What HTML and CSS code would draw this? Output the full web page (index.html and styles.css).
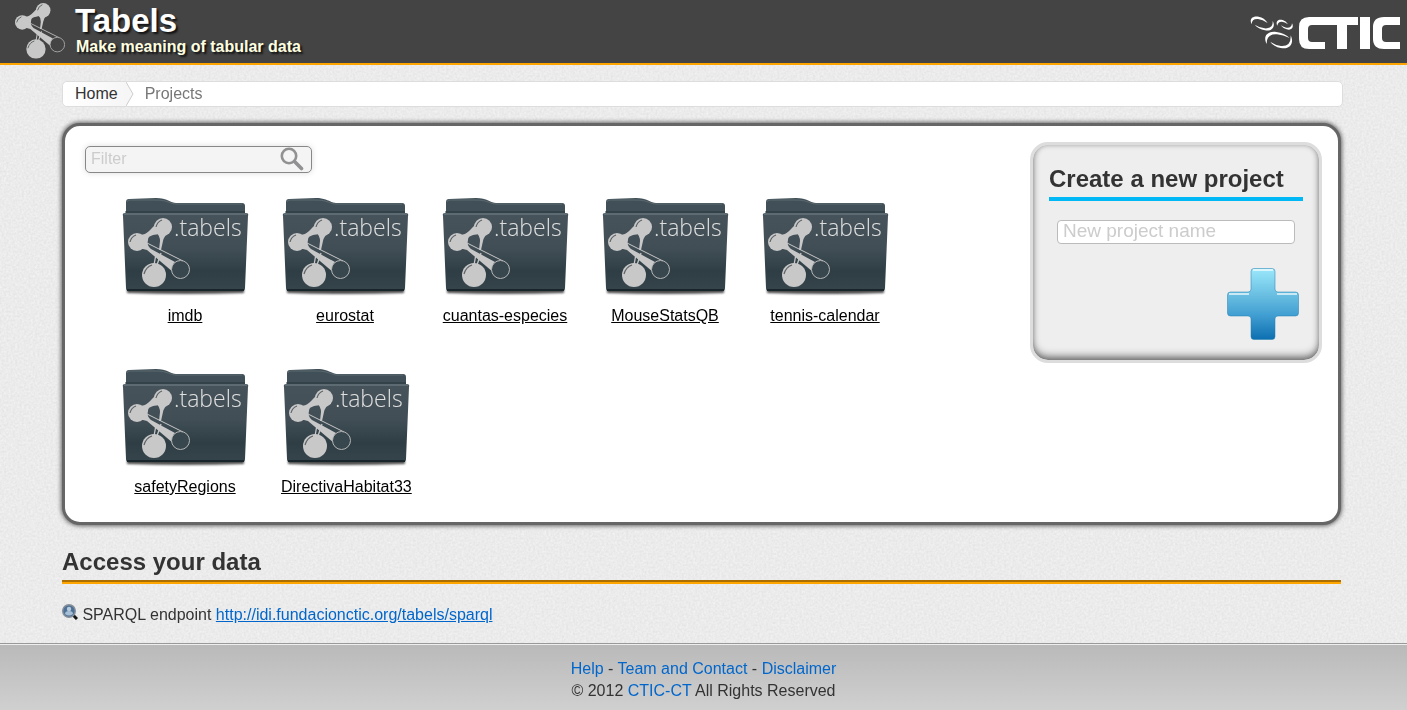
FILE: index.html
```html
<!DOCTYPE html>
<html lang="en">
<head>
<meta charset="utf-8">
<title>Tabels - Projects</title>
<link rel="stylesheet" href="styles.css">
</head>
<body>
<svg class="defs" aria-hidden="true">
  <defs>
    <linearGradient id="front" x1="0" y1="0" x2="0" y2="1"><stop offset="0" stop-color="#47535a"/><stop offset=".45" stop-color="#414e55"/><stop offset=".75" stop-color="#2f3e45"/><stop offset="1" stop-color="#36444b"/></linearGradient>
    <linearGradient id="plus" x1="0" y1="0" x2="0" y2="1"><stop offset="0" stop-color="#9ae8fb"/><stop offset=".4" stop-color="#66bce0"/><stop offset=".65" stop-color="#429fd2"/><stop offset="1" stop-color="#0c6fb0"/></linearGradient>
    <filter id="soft" x="-20%" y="-50%" width="140%" height="200%"><feGaussianBlur stdDeviation="1.2"/></filter>
    <filter id="grain" x="0" y="0" width="100%" height="100%" color-interpolation-filters="sRGB">
      <feTurbulence type="fractalNoise" baseFrequency=".45" numOctaves="2" seed="4"/>
      <feColorMatrix values=".08 0 0 0 .882  .08 0 0 0 .882  .08 0 0 0 .882  0 0 0 0 1"/>
    </filter>
    <symbol id="molecule" viewBox="0 0 62 70">
      <g fill="#c8c8c8">
        <circle cx="35" cy="10" r="9"/>
        <circle cx="9" cy="25" r="9"/>
        <circle cx="26" cy="58" r="12"/>
        <path d="M9 17c8 3 12-3 18-9l4 9c-7 1-11 2-11 6-1 4 0 6 3 9l24 13q-4 4-2 10L19 33l-8-2z"/>
        <path d="M28 15q4 4 4 9l-1 9h2l2-9q1-5 6-9z"/>
      </g>
      <path d="M28 37l-2 11M33 36l-4 12" fill="none" stroke="#c8c8c8" stroke-width="1.300"/>
      <path d="M19 26l36 18" fill="none" stroke="#c8c8c8"/>
      <circle cx="52.500" cy="52.500" r="9" fill="currentColor" stroke="#b5b5b5"/>
      <g fill="none" stroke="#5c6265" stroke-width="1.200">
        <path d="M28 10q1-5 6-7M2 25q1-5 6-7M16 57q2-7 8-9"/>
      </g>
    </symbol>
    <symbol id="folder" viewBox="0 0 128 104">
      <path d="M6 92h117v4q-59 2-117 0z" fill="#000" opacity=".7" filter="url(#soft)"/>
      <path d="M5 5q0-3 3-3l27-1c11 0 15 5 20 5h66q3 0 3 3v12H5z" fill="#415058"/>
      <path d="M6 5q0-2 3-2h26c11 0 15 4 20 4h66" fill="none" stroke="#5c686e"/>
      <path d="M4 15h120" stroke="#273238"/>
      <path d="M4 16h121q3 0 2 3l-3 72q0 3-3 3H8q-3 0-3-3L2 19q-1-3 2-3z" fill="url(#front)"/>
      <path d="M3 17h123" stroke="#75838a"/>
      <path d="M6 93h117" stroke="#18252b" stroke-width="2"/>
      <use href="#molecule" x="7" y="20" width="62" height="70"/>
      <text x="53" y="39" class="folder-word">.tabels</text>
    </symbol>
  </defs>
</svg>
<svg class="texture" aria-hidden="true"><rect width="100%" height="100%" filter="url(#grain)"/></svg>

<header class="header">
  <div class="brand">
    <svg class="brand-logo" viewBox="0 0 62 70" aria-hidden="true"><use href="#molecule"/></svg>
    <div>
      <h1 class="brand-name">Tabels</h1>
      <p class="brand-tagline">Make meaning of tabular data</p>
    </div>
  </div>
  <svg class="ctic" viewBox="0 0 152 34" role="img" aria-label="CTIC">
    <g fill="#fff">
      <path d="M101 1v8H63q-4 0-4 4v9q0 4 4 4h13v7H60q-10 0-10-10V11Q50 1 60 1z"/>
      <path d="M88 1h10v32H88zM111 1h10v32h-10z"/>
      <path d="M98 1h11v8H98z"/>
      <path d="M151 1v8h-14q-4 0-4 4v9q0 4 4 4h14v7h-16q-11 0-11-10V11q0-10 11-10z"/>
    </g>
    <g fill="#fff" transform="translate(-3 -6) scale(.3333)">
      <path d="M17 43C8 25 22 17 38 20q17 3 27 19Q50 28 36 27 17 26 17 43z"/>
      <path d="M80 32C90 50 78 65 57 61Q37 57 26 44 42 54 56 55 82 57 80 32z"/>
      <path d="M94 47C88 34 96 26 110 30q10 3 16 13-10-8-18-8-12-1-14 12z"/>
      <path d="M138 40C145 53 136 62 122 58q-11-3-18-12 9 6 17 7 16 2 17-13z"/>
      <path d="M62 102C50 78 64 62 91 66q24 3 40 18Q112 75 93 73 61 71 62 102z"/>
      <path d="M134 76C146 101 131 120 104 114q-20-4-32-19 17 11 33 13 31 2 29-32z"/>
    </g>
  </svg>
</header>

<main class="page">
  <nav class="crumbs" aria-label="Breadcrumb">
    <a class="crumb-home" href="#">Home</a>
    <svg class="crumb-arrow" viewBox="0 0 8 24" aria-hidden="true"><path d="M0 0l7 12-7 12z" fill="#f6f6f6"/><path d="M0 0l7 12-7 12" fill="none" stroke="#ccc"/></svg>
    <span class="crumb-current">Projects</span>
  </nav>

  <section class="panel">
    <div class="projects">
      <div class="filter">
        <input class="filter-input" type="text" placeholder="Filter" aria-label="Filter">
        <svg class="filter-icon" viewBox="0 0 24 24" aria-hidden="true"><circle cx="9" cy="9" r="7.200" fill="none" stroke="#919193" stroke-width="2.600"/><path d="M14.500 14.500l7 7" stroke="#919193" stroke-width="3.600" stroke-linecap="round"/></svg>
      </div>
      <ul class="folders">
        <li><a class="project" href="#"><svg class="folder" aria-hidden="true"><use href="#folder"/></svg>imdb</a></li>
        <li><a class="project" href="#"><svg class="folder" aria-hidden="true"><use href="#folder"/></svg>eurostat</a></li>
        <li><a class="project" href="#"><svg class="folder" aria-hidden="true"><use href="#folder"/></svg>cuantas-especies</a></li>
        <li><a class="project" href="#"><svg class="folder" aria-hidden="true"><use href="#folder"/></svg>MouseStatsQB</a></li>
        <li><a class="project" href="#"><svg class="folder" aria-hidden="true"><use href="#folder"/></svg>tennis-calendar</a></li>
        <li><a class="project" href="#"><svg class="folder" aria-hidden="true"><use href="#folder"/></svg>safetyRegions</a></li>
        <li><a class="project" href="#"><svg class="folder" aria-hidden="true"><use href="#folder"/></svg>DirectivaHabitat33</a></li>
      </ul>
    </div>
    <form class="create">
      <h2 class="create-title">Create a new project</h2>
      <input class="create-name" type="text" placeholder="New project name" aria-label="New project name">
      <button class="create-add" type="button" aria-label="Create project">
        <svg class="plus" viewBox="0 0 72 72" aria-hidden="true">
          <path d="M27 .5h18q3 0 3 3V21q0 3 3 3h17.500q3 0 3 3v18q0 3-3 3H51q-3 0-3 3v17.500q0 3-3 3H27q-3 0-3-3V51q0-3-3-3H3.500q-3 0-3-3V27q0-3 3-3H21q3 0 3-3V3.500q0-3 3-3z" fill="url(#plus)" stroke="#1f80b0" stroke-opacity=".5"/>
          <path d="M26 2h20M2 26h20M50 26h20" stroke="#fff" stroke-opacity=".65" stroke-width="2"/>
        </svg>
      </button>
    </form>
  </section>

  <section>
    <h2 class="access-title">Access your data</h2>
    <p class="endpoint">
      <svg class="endpoint-icon" viewBox="0 0 16 16" aria-hidden="true"><path d="M11 11l4 4" stroke="#161616" stroke-width="3"/><circle cx="7" cy="7" r="6.300" fill="#4d7196" stroke="#87909a" stroke-width="1.400"/><circle cx="7" cy="5" r="2.200" fill="#b8cbdc"/><path d="M3 10q0-3 4-3t4 3q-4 3-8 0" fill="#a7bfd5"/></svg>
      SPARQL endpoint <a href="#">http://idi.fundacionctic.org/tabels/sparql</a>
    </p>
  </section>
</main>

<footer class="footer">
  <p><a href="#">Help</a> - <a href="#">Team and Contact</a> - <a href="#">Disclaimer</a></p>
  <p>© 2012 <a href="#">CTIC-CT</a> All Rights Reserved</p>
</footer>
</body>
</html>
```

FILE: styles.css
```css
* { box-sizing: border-box; }
body {
  margin: 0;
  min-height: 100vh;
  display: flex;
  flex-direction: column;
  background: #ebebeb;
  color: #333;
  font: 16px/22px "Liberation Sans", Arial, sans-serif;
}
h1, h2, p, ul { margin: 0; padding: 0; }
a { color: #0066cc; }
.defs { position: absolute; width: 0; height: 0; }
.texture { position: fixed; inset: 0; z-index: -1; width: 100%; height: 100%; }

.header {
  display: flex;
  justify-content: space-between;
  align-items: flex-start;
  padding: 2px 6px 4px 15px;
  background: #444;
  border-bottom: 2px solid #ffa500;
}
.brand { display: flex; gap: 10px; }
.brand-logo { width: 50px; height: 57px; color: #444; }
.brand-name {
  color: #fff;
  font-size: 33px;
  line-height: 38px;
  text-shadow: 2px 2px 2px #111;
}
.brand-tagline {
  margin-left: 1px;
  color: #ffffe0;
  font-weight: bold;
  line-height: 14px;
  text-shadow: 2px 2px 2px #111;
}
.ctic { width: 152px; height: 34px; margin-top: 14px; }

.page { flex: 1; padding: 16px 66px 16px 62px; }
.crumbs {
  display: flex;
  height: 26px;
  margin-right: -2px;
  background: #fff;
  border: 1px solid #ddd;
  border-radius: 5px;
  line-height: 23px;
}
.crumb-home {
  padding: 0 8px 0 12px;
  color: #333;
  text-decoration: none;
  background: linear-gradient(90deg, #fff, #f6f6f6);
  border-radius: 5px 0 0 5px;
}
.crumb-arrow { width: 8px; height: 24px; }
.crumb-current { margin-left: 11px; color: #777; }

.panel {
  display: flex;
  align-items: flex-start;
  margin: 16px 0 0;
  padding: 16px 16px 24px 20px;
  background: #fff;
  border: 3px solid #666;
  border-radius: 18px;
  box-shadow: 0 0 4px 1px #666;
}
.projects { flex: 1; }
.filter { position: relative; width: 227px; margin-top: 4px; }
.filter-input {
  display: block;
  width: 100%;
  height: 27px;
  padding: 0 36px 2px 5px;
  background: #f4f4f4;
  border: 1px solid #888;
  border-radius: 5px;
  box-shadow: 0 0 6px #ddd;
  font: inherit;
}
::placeholder { color: #ccc; opacity: 1; }
.filter-icon { position: absolute; top: 1px; right: 8px; width: 24px; height: 24px; }
.folders {
  display: flex;
  flex-wrap: wrap;
  gap: 41px 32px;
  padding: 24px 0 0 36px;
  list-style: none;
}
.project {
  display: flex;
  flex-direction: column;
  align-items: center;
  min-width: 128px;
  color: #000;
}
.folder { width: 128px; height: 104px; margin-bottom: 4px; color: #38464d; }
.folder-word { fill: #e0e0e0; font: 300 23px "Open Sans", sans-serif; }

.create {
  display: flex;
  flex-direction: column;
  width: 292px;
  height: 221px;
  padding: 18px 16px;
  background: #eee;
  border: 3px solid #ddd;
  border-radius: 18px;
  box-shadow: inset 0 -5px 8px -2px #666, inset 0 0 5px #aaa;
}
.create-title {
  padding-bottom: 2px;
  border-bottom: 4px solid #00b8f5;
  font-size: 24px;
  line-height: 32px;
}
.create-name {
  margin: 19px 8px 0;
  height: 24px;
  padding: 0 5px 2px;
  background: #fff;
  border: 1px solid #bbb;
  border-radius: 4px;
  font: 19px "Liberation Sans", Arial, sans-serif;
}
.create-add {
  align-self: flex-end;
  margin: 24px 4px 0 0;
  padding: 0;
  background: none;
  border: 0;
}
.plus { display: block; width: 72px; height: 72px; }

.access-title {
  margin-top: 21px;
  padding-bottom: 2px;
  border-bottom: 4px groove #ffa500;
  font-size: 24px;
  line-height: 32px;
}
.endpoint { margin-top: 20px; }
.endpoint-icon { width: 16px; height: 16px; vertical-align: 0; }

.footer {
  padding: 14px 0 8px;
  background: linear-gradient(#b9b9b9, #d0d0d0);
  border-top: 1px solid #999;
  box-shadow: inset 0 1px #eee;
  text-align: center;
}
.footer a { text-decoration: none; }
```
